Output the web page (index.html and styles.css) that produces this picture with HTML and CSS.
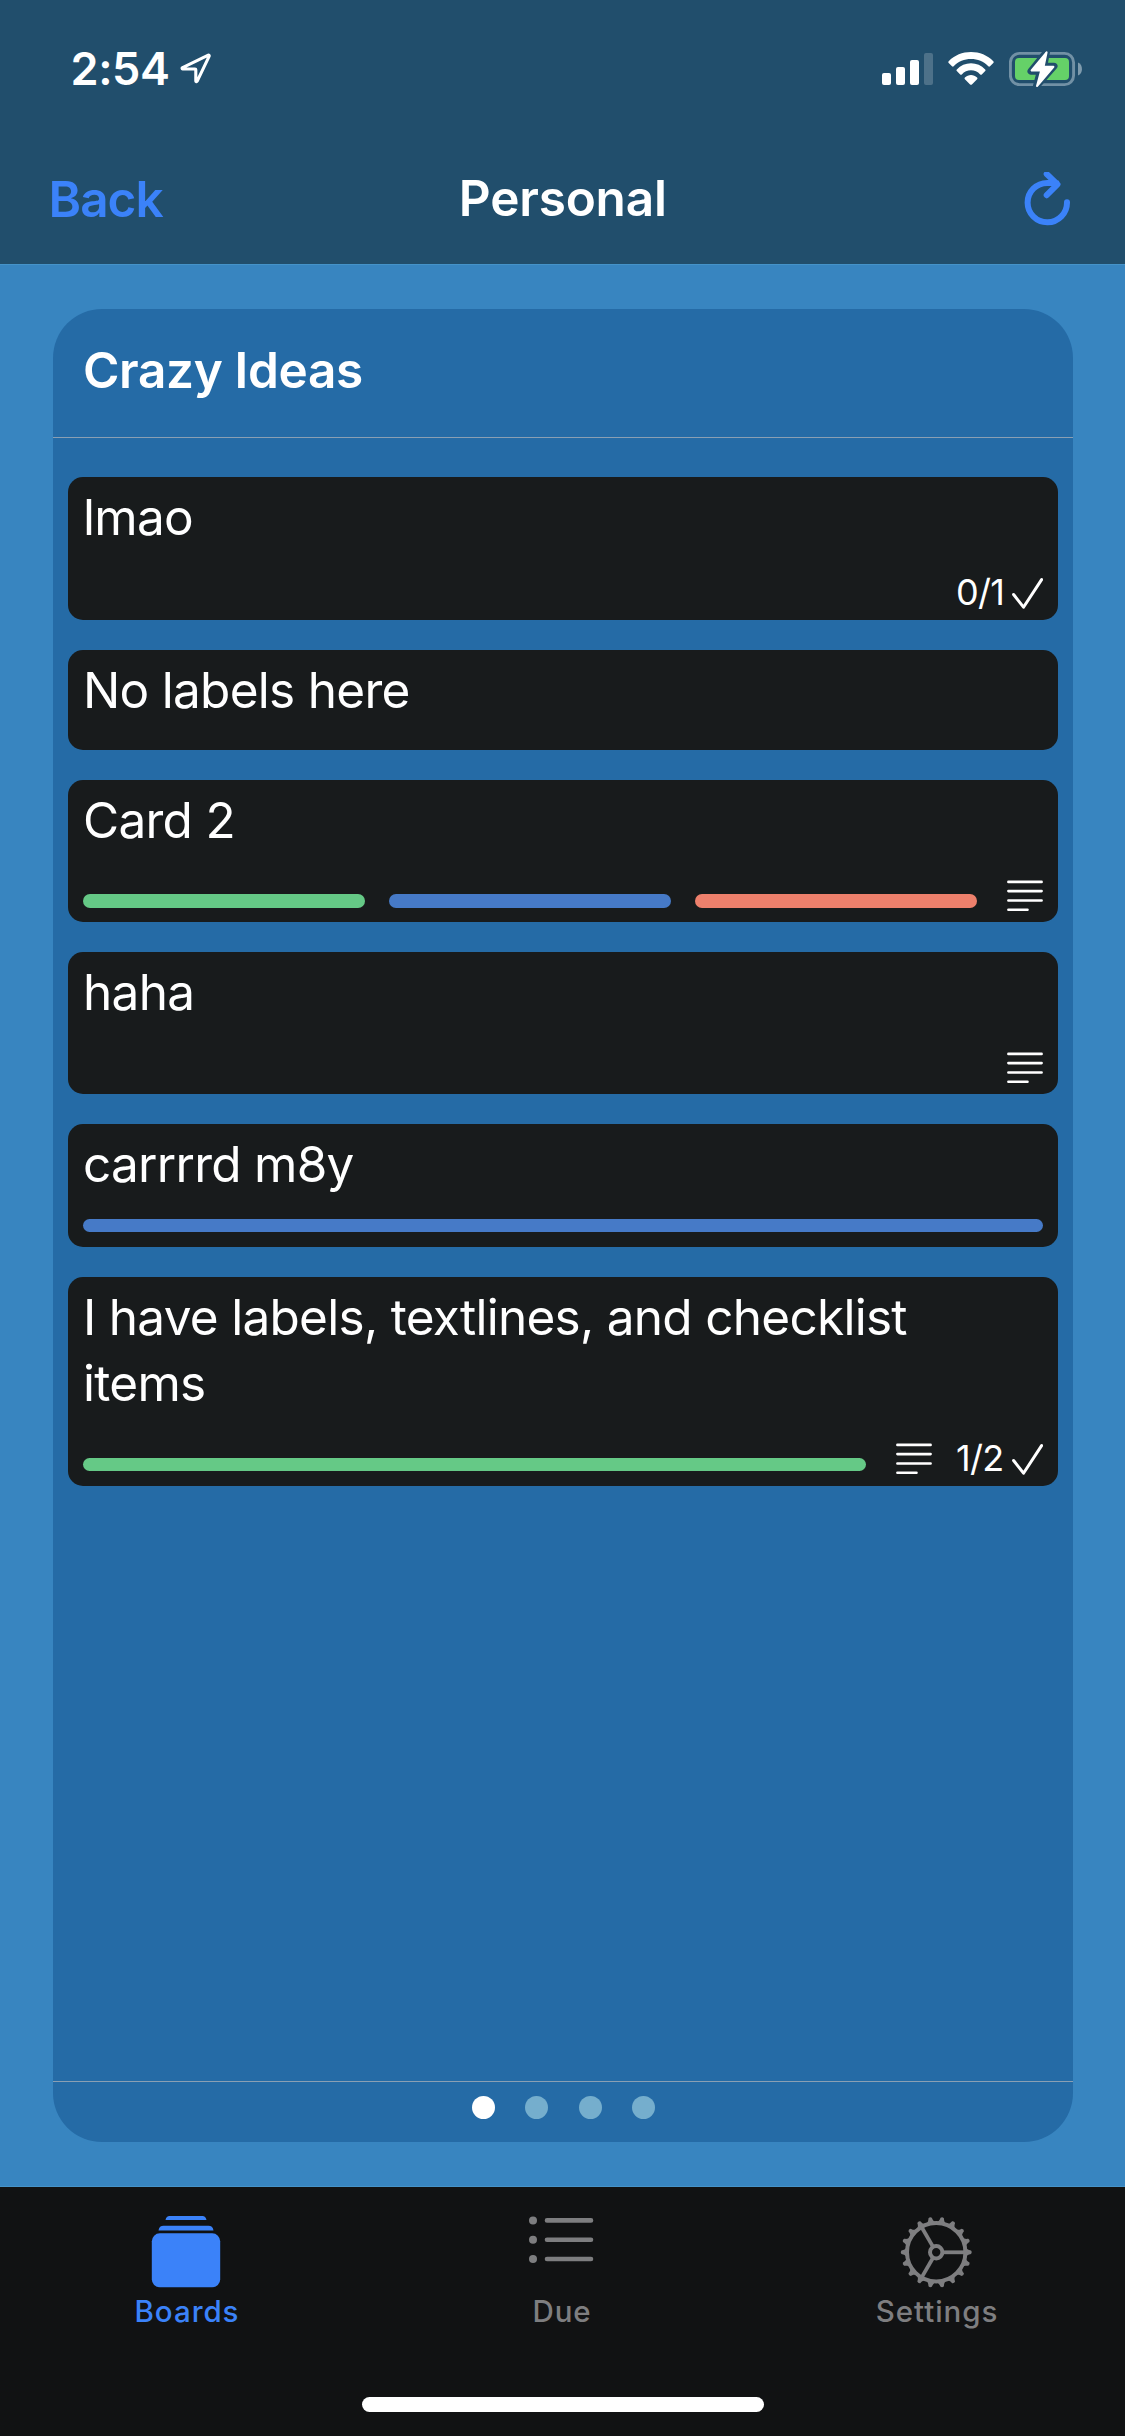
FILE: index.html
```
<!DOCTYPE html>
<html lang="en">
<head>
<meta charset="utf-8">
<title>Personal</title>
<link rel="stylesheet" href="styles.css">
</head>
<body>
<svg class="defs" width="0" height="0">
  <symbol id="check" viewBox="0 0 31 31"><path d="M1.6 16.5 11.5 29.2 29.6 1.6" fill="none" stroke="currentColor" stroke-width="3" stroke-linecap="round" stroke-linejoin="round"/></symbol>
  <symbol id="lines" viewBox="0 0 36 32"><path d="M1.4 1.9H34.6M1.4 11.1H34.6M1.4 20.5H34.6M1.4 29.8H20.5" fill="none" stroke="currentColor" stroke-width="2.6" stroke-linecap="round"/></symbol>
</svg>
<div class="screen">
  <header class="top">
    <div class="status">
      <span class="time">2:54</span>
      <svg class="location" width="32" height="32" viewBox="0 0 32 32"><path d="M28.3 3.2 2.6 15.6a.7.7 0 0 0 .3 1.4H15a.8.8 0 0 1 .8.8V29a.7.7 0 0 0 1.3.3L29.2 4.1a.7.7 0 0 0-.9-.9Z" fill="none" stroke="#fff" stroke-width="3.1" stroke-linejoin="round"/></svg>
      <div class="status-icons">
        <svg width="51" height="38" viewBox="0 0 51 38" fill="#fff"><rect x="0" y="23" width="9" height="12" rx="2"/><rect x="14" y="17" width="9" height="18" rx="2"/><rect x="28" y="10" width="9" height="25" rx="2"/><rect x="42" y="3" width="9" height="32" rx="2" opacity=".2"/></svg>
        <svg width="46" height="38" viewBox="0 0 46 38" fill="#fff"><path d="M.7 11.2C6.5 5.200 14.500 2 23 2s16.500 3.200 22.300 9.200a1.200 1.200 0 0 1 0 1.700l-3.300 3.300a1.200 1.200 0 0 1-1.700 0C35.700 11.500 29.600 9 23 9s-12.700 2.500-17.300 7.200a1.200 1.200 0 0 1-1.700 0L.7 12.900a1.200 1.200 0 0 1 0-1.700Z"/><path d="M8.800 19.400C12.600 15.500 17.600 13.300 23 13.300s10.400 2.200 14.200 6.100a1.200 1.200 0 0 1 0 1.700l-3.400 3.300a1.200 1.200 0 0 1-1.600 0C29.700 21.800 26.500 20.300 23 20.300s-6.700 1.500-9.200 4.100a1.200 1.200 0 0 1-1.600 0l-3.400-3.300a1.200 1.200 0 0 1 0-1.700Z"/><path d="M16.900 27.600C18.600 26 20.700 25 23 25s4.400 1 6.100 2.600a1.200 1.200 0 0 1 0 1.700l-5.200 5.100a1.300 1.300 0 0 1-1.800 0l-5.200-5.100a1.200 1.200 0 0 1 0-1.700Z"/></svg>
        <svg width="74" height="38" viewBox="0 0 74 38"><rect x="1.400" y="3.400" width="63.200" height="31.200" rx="9" fill="none" stroke="#7291a5" stroke-width="2.900"/><path d="M69 12.500c5.300 2 5.300 11 0 13Z" fill="#7f9bad"/><rect x="6" y="8" width="54" height="22" rx="4" fill="#65d168"/><path d="M37.500 2 22 21.300h9.300L27.500 36 45 16.200H34.800Z" fill="#fff" stroke="#214e6c" stroke-width="7" stroke-linejoin="round"/><path d="M37.600 2.300 22.600 20.500h9.600L28 36 44.400 16.800H34.600Z" fill="#fff" stroke="#fff" stroke-width="2" stroke-linejoin="round"/></svg>
      </div>
    </div>
    <nav class="nav">
      <a class="back">Back</a>
      <h1 class="title">Personal</h1>
      <svg class="refresh" width="48" height="56" viewBox="0 0 48 56" fill="none" stroke="#3b82f9" stroke-width="6" stroke-linecap="round" stroke-linejoin="round"><path d="M43 30.300A19.700 19.700 0 1 1 23.300 10.900H32.500M22.700 2 33.500 12.300 22.700 23.200"/></svg>
    </nav>
  </header>
  <main class="board">
    <section class="list">
      <h2 class="list-title">Crazy Ideas</h2>
      <div class="cards">
        <article class="card card-check">
          <p class="card-title">lmao</p>
          <div class="meta"><span class="count">0/1</span><svg class="check" width="31" height="31"><use href="#check"/></svg></div>
        </article>
        <article class="card card-plain"><p class="card-title">No labels here</p></article>
        <article class="card card-meta">
          <p class="card-title">Card 2</p>
          <div class="meta">
            <div class="labels"><i class="label green"></i><i class="label blue"></i><i class="label orange"></i></div>
            <svg class="lines" width="36" height="32"><use href="#lines"/></svg>
          </div>
        </article>
        <article class="card card-meta">
          <p class="card-title">haha</p>
          <div class="meta"><svg class="lines" width="36" height="32"><use href="#lines"/></svg></div>
        </article>
        <article class="card card-label">
          <p class="card-title">carrrrd m8y</p>
          <div class="meta"><div class="labels"><i class="label blue"></i></div></div>
        </article>
        <article class="card card-tall">
          <p class="card-title">I have labels, textlines, and checklist items</p>
          <div class="meta">
            <div class="labels"><i class="label green"></i></div>
            <svg class="lines" width="36" height="32"><use href="#lines"/></svg>
            <span class="count">1/2</span><svg class="check" width="31" height="31"><use href="#check"/></svg>
          </div>
        </article>
      </div>
      <footer class="pager"><i class="dot active"></i><i class="dot"></i><i class="dot"></i><i class="dot"></i></footer>
    </section>
  </main>
  <nav class="tabs">
    <div class="tab active">
      <svg width="72" height="74" viewBox="0 0 72 74" fill="currentColor"><path d="M15.500 5c.5-2.600 2-4 4-4h33c2 0 3.500 1.400 4 4ZM8.500 15.500c.5-3.300 2.300-4.700 5-4.700h45c2.700 0 4.500 1.400 5 4.700Z"/><rect x="1.800" y="18.300" width="68.400" height="54" rx="8"/></svg>
      <span>Boards</span>
    </div>
    <div class="tab">
      <svg width="72" height="74" viewBox="0 0 72 74" fill="currentColor"><circle cx="8" cy="5.400" r="4"/><circle cx="8" cy="24.700" r="4"/><circle cx="8" cy="44" r="4"/><path d="M22 5.400H66M22 24.700H66M22 44H66" stroke="currentColor" stroke-width="4.600" stroke-linecap="round"/></svg>
      <span>Due</span>
    </div>
    <div class="tab">
      <svg width="72" height="74" viewBox="0 0 72 74" fill="currentColor">
        <defs><path id="tooth" d="M29.500 -5C31 -3 32 -2.300 34.800 -1.700Q36.200 0 34.800 1.700C32 2.300 31 3 29.500 5Z"/>
        <g id="teeth"><use href="#tooth"/><use href="#tooth" transform="rotate(20)"/><use href="#tooth" transform="rotate(40)"/></g>
        <g id="third"><use href="#teeth"/><use href="#teeth" transform="rotate(60)"/><path d="M6 0H29" stroke="currentColor" stroke-width="3.800"/></g></defs>
        <g transform="translate(36.200 37.300)">
          <use href="#third"/><use href="#third" transform="rotate(120)"/><use href="#third" transform="rotate(240)"/>
          <circle r="29.200" fill="none" stroke="currentColor" stroke-width="4"/>
          <circle r="6.200" fill="none" stroke="currentColor" stroke-width="4"/>
        </g>
      </svg>
      <span>Settings</span>
    </div>
    <div class="home-indicator"></div>
  </nav>
</div>
</body>
</html>
```
FILE: styles.css
```
* { box-sizing: border-box; }
body {
  margin: 0;
  font-family: Inter, "Liberation Sans", sans-serif;
  color: #fff;
}
h1, h2, p { margin: 0; }
svg { display: block; flex: none; }
.defs { position: absolute; }

.screen {
  width: 1125px;
  height: 2436px;
  display: flex;
  flex-direction: column;
  background: #3885c0;
}

/* Header */
.top { height: 264px; background: #214e6c; }
.status {
  height: 132px;
  padding: 42px 42px 0 70.5px;
  display: flex;
  align-items: flex-start;
}
.time { font-size: 45px; font-weight: 600; line-height: 54px; letter-spacing: -0.4px; }
.location { margin: 10px 0 0 10px; }
.status-icons { margin: 8px 0 0 auto; display: flex; gap: 15px; }
.nav {
  height: 132px;
  padding: 0 53px 0 48.5px;
  display: grid;
  grid-template-columns: 1fr auto 1fr;
  align-items: center;
  font-size: 49.5px;
  line-height: 60px;
}
.back { color: #3b82f9; font-weight: 600; letter-spacing: -1px; padding-top: 2px; }
.title { padding-left: 5px; font-size: inherit; font-weight: 600; letter-spacing: -0.2px; }
.refresh { justify-self: end; margin-top: 3px; }

/* Board */
.board {
  flex: 1;
  padding: 44px 52px 44px 53px;
  display: flex;
  border: solid #4593c9;
  border-width: 1px 0;
}
.list {
  flex: 1;
  display: flex;
  flex-direction: column;
  border-radius: 49px;
  background: #256ba6;
}
.list-title {
  height: 129px;
  padding-left: 30px;
  border-bottom: 1px solid #8a9fb3;
  font-size: 49.5px;
  font-weight: 600;
  line-height: 122px;
  letter-spacing: -0.35px;
}
.cards {
  flex: 1;
  padding: 39px 15px 0;
  display: flex;
  flex-direction: column;
  gap: 30px;
}
.card {
  display: flex;
  flex-direction: column;
  padding: 7px 15px 0;
  border-radius: 15px;
  background: #181b1c;
}
.card-check { height: 143px; }
.card-plain { height: 100px; }
.card-meta { height: 142px; }
.card-label { height: 123px; }
.card-tall { height: 209px; }
.card-title {
  padding-right: 15px;
  font-size: 49.5px;
  line-height: 66px;
  letter-spacing: -0.72px;
}
.meta {
  margin-top: auto;
  padding-bottom: 11px;
  display: flex;
  align-items: flex-end;
  justify-content: flex-end;
}
.labels { flex: 1; display: flex; gap: 24px; margin-bottom: 3px; }
.label { flex: 1; height: 14px; border-radius: 7px; }
.card-label .labels, .card-tall .labels { margin-bottom: 4px; }
.card-label .label, .card-tall .label { height: 13px; }
.green { background: #65c986; }
.blue { background: #467ac7; }
.orange { background: #ed806c; }
.lines { margin-left: 30px; }
.card-meta .lines { margin-bottom: -1px; }
.count {
  width: 56px;
  font-size: 36px;
  line-height: 36px;
  letter-spacing: -0.7px;
  margin-bottom: -1px;
}
.lines + .count { margin-left: 24px; }
.pager {
  height: 61px;
  padding: 14px 0 0 1px;
  border-top: 1px solid #8a9fb3;
  display: flex;
  justify-content: center;
  gap: 30.2px;
}
.dot { width: 23px; height: 23px; border-radius: 50%; background: #75aecd; }
.dot.active { background: #fff; }

/* Tab bar */
.tabs {
  height: 249px;
  padding-top: 28px;
  display: grid;
  grid-template-columns: repeat(3, 375px);
  grid-template-rows: 182px auto;
  background: #111213;
}
.tab {
  padding-right: 3px;
  display: flex;
  flex-direction: column;
  align-items: center;
  color: #7e7e80;
  font-size: 29.5px;
  font-weight: 500;
  line-height: 36px;
  letter-spacing: 0.95px;
}
.tab.active { color: #3b82f9; }
.tab span { margin-top: 4px; padding-left: 2px; }
.home-indicator {
  grid-column: 1 / -1;
  justify-self: center;
  width: 402px;
  height: 15px;
  border-radius: 8px;
  background: #fff;
}
```
